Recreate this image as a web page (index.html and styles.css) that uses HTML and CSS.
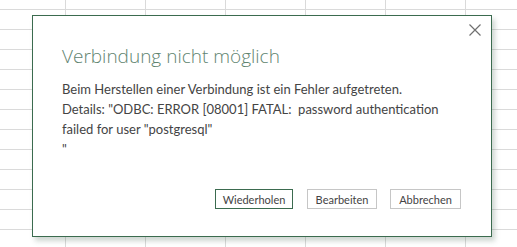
FILE: index.html
```html
<!DOCTYPE html>
<html lang="de">
<head>
    <meta charset="UTF-8">
    <title>Verbindung nicht möglich</title>
    <link rel="stylesheet" href="styles.css">
</head>
<body>
    <div class="dialog">
        <button class="close" title="Schließen">
            <svg width="12" height="12" viewBox="0 0 12 12"><path d="M0.5 0.5 L11.5 11.5 M11.5 0.5 L0.5 11.5" stroke="#707070" stroke-width="1.2" fill="none"/></svg>
        </button>
        <h1>Verbindung nicht möglich</h1>
        <p class="message">Beim Herstellen einer Verbindung ist ein Fehler aufgetreten.</p>
        <p class="details">Details: "ODBC: ERROR [08001] FATAL:  password authentication
failed for user "postgresql"
"</p>
        <div class="actions">
            <button class="btn primary">Wiederholen</button>
            <button class="btn">Bearbeiten</button>
            <button class="btn wide">Abbrechen</button>
        </div>
    </div>
</body>
</html>
```
FILE: styles.css
```css
body {
    margin: 0;
    height: 247px;
    overflow: hidden;
    font-family: Lato, "Open Sans", sans-serif;
    color: #444;
    background-color: #fff;
    background-image:
        linear-gradient(to right, #dadada 1px, transparent 1px),
        linear-gradient(to bottom, #dadada 1px, transparent 1px);
    background-size: 80px 20px;
    background-position: 65px 9px;
}
.dialog {
    position: relative;
    box-sizing: border-box;
    width: 460px;
    height: 222px;
    margin: 15px 0 0 32px;
    padding: 27px 30px 0 29px;
    background: #fff;
    border: 1px solid #3b6b4f;
    box-shadow: 3px 4px 5px rgba(60, 90, 70, 0.25);
    display: flex;
    flex-direction: column;
}
.close { position: absolute; top: 4px; right: 6px; width: 20px; height: 20px; padding: 0; border: none; background: none; display: flex; align-items: center; justify-content: center; }
h1 { margin: 0 0 10px; font-family: "Open Sans", sans-serif; font-weight: 300; font-size: 19px; color: #5f8470; line-height: 26px; }
p { margin: 0; font-size: 13px; line-height: 20px; }
.details { white-space: pre-wrap; }
.actions { display: flex; justify-content: flex-end; gap: 13px; margin-top: auto; margin-bottom: 27px; }
.btn { box-sizing: border-box; height: 20px; width: 70px; padding: 0; font-family: Lato, sans-serif; font-size: 11px; color: #444; background: #fff; border: 1px solid #c6c6c6; }
.btn.primary { border-color: #3b6b4f; width: 78px; margin-right: 1px; }
.btn.wide { width: 71px; }
```
